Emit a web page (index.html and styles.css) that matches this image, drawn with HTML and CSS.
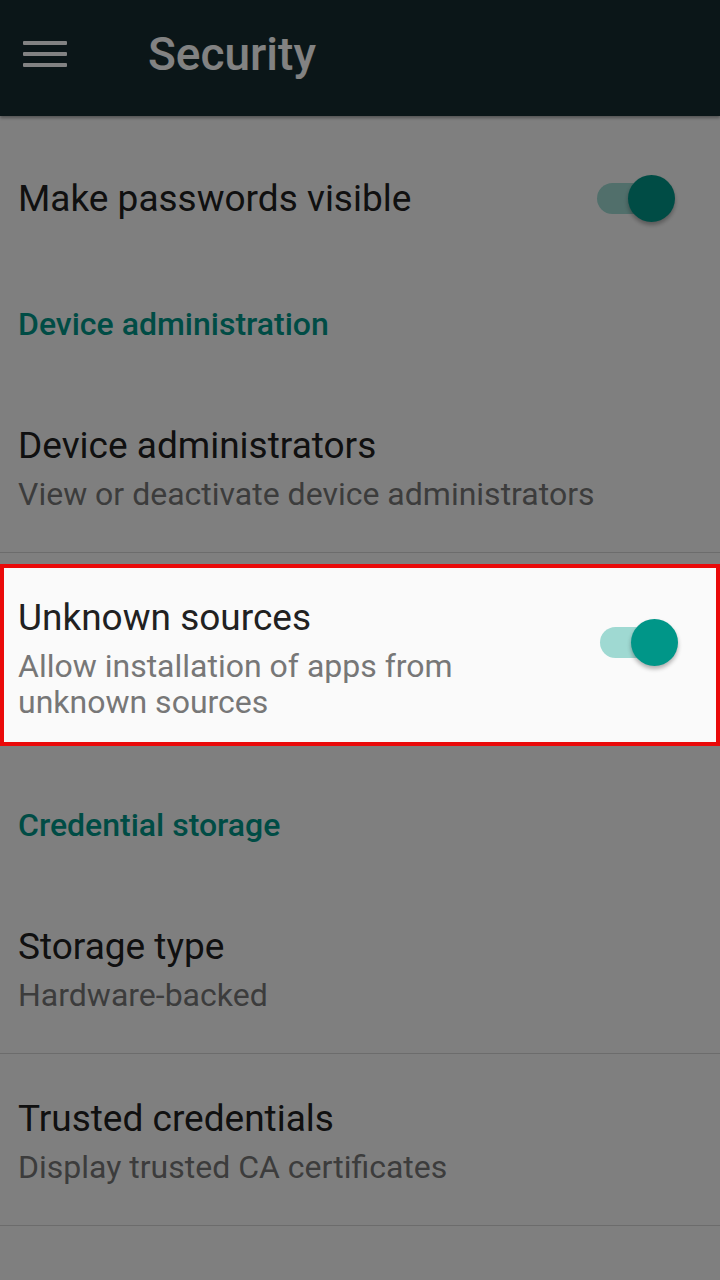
FILE: index.html
```html
<!DOCTYPE html>
<html lang="en">
<head>
  <meta charset="UTF-8">
  <meta name="viewport" content="width=device-width, initial-scale=1.0">
  <title>Security</title>
  <link rel="stylesheet" href="styles.css">
</head>
<body>
<header class="toolbar">
  <svg class="menu-icon" width="44" height="26" viewBox="0 0 44 26">
    <rect x="0" y="0" width="44" height="4" rx="1"/>
    <rect x="0" y="11" width="44" height="4" rx="1"/>
    <rect x="0" y="22" width="44" height="4" rx="1"/>
  </svg>
  <h1 class="toolbar-title">Security</h1>
</header>

<main class="prefs">
  <div class="pref pref-switch top">
    <div class="pref-text">
      <div class="pref-title">Make passwords visible</div>
    </div>
    <span class="switch"><span class="switch-thumb"></span></span>
  </div>

  <div class="pref-category">Device administration</div>

  <div class="pref">
    <div class="pref-text">
      <div class="pref-title">Device administrators</div>
      <div class="pref-summary">View or deactivate device administrators</div>
    </div>
  </div>
  <div class="divider"></div>

  <div class="pref pref-switch highlighted">
    <div class="pref-text">
      <div class="pref-title">Unknown sources</div>
      <div class="pref-summary">Allow installation of apps from unknown sources</div>
    </div>
    <span class="switch"><span class="switch-thumb"></span></span>
  </div>

  <div class="pref-category">Credential storage</div>

  <div class="pref">
    <div class="pref-text">
      <div class="pref-title">Storage type</div>
      <div class="pref-summary">Hardware-backed</div>
    </div>
  </div>
  <div class="divider"></div>

  <div class="pref">
    <div class="pref-text">
      <div class="pref-title">Trusted credentials</div>
      <div class="pref-summary">Display trusted CA certificates</div>
    </div>
  </div>
  <div class="divider"></div>
</main>

<div class="dim"></div>
</body>
</html>
```

FILE: styles.css
```css
body {
  margin: 0;
  font-family: Roboto, "Noto Sans", sans-serif;
  background-color: #fafafa;
  color: #212121;
  height: 1280px;
  overflow: hidden;
}

.toolbar {
  height: 108px;
  padding: 0 0 8px 23px;
  display: flex;
  align-items: center;
  gap: 81px;
  background-color: #172c30;
  box-shadow: 0 2px 3px rgba(0, 0, 0, 0.35);
}

.menu-icon {
  fill: #ffffff;
  flex-shrink: 0;
}

.toolbar-title {
  margin: 0;
  font-size: 46px;
  line-height: 54px;
  font-weight: 500;
  color: #ffffff;
}

.prefs {
  display: flex;
  flex-direction: column;
}

.pref {
  display: flex;
  padding: 43px 18px 40px;
}

.pref-switch {
  align-items: center;
  padding-right: 45px;
}

.pref.top {
  padding-top: 59px;
  padding-bottom: 37px;
}

.pref-text {
  flex: 1;
  min-width: 0;
}

.pref-title {
  font-size: 37px;
  line-height: 44px;
}

.pref-summary {
  margin-top: 8px;
  font-size: 32px;
  line-height: 36px;
  color: #777777;
}

.pref-switch .pref-text {
  padding-right: 20px;
}

.pref-category {
  padding: 45px 18px 37px;
  font-size: 32px;
  line-height: 40px;
  font-weight: 500;
  color: #009688;
}

.divider {
  height: 1px;
  background-color: #d4d4d4;
}

.switch {
  position: relative;
  width: 78px;
  height: 47px;
  flex-shrink: 0;
}

.switch::before {
  content: "";
  position: absolute;
  left: 0;
  top: 8px;
  width: 74px;
  height: 31px;
  border-radius: 16px;
  background-color: #9fd9d2;
}

.switch-thumb {
  position: absolute;
  right: 0;
  top: 0;
  width: 47px;
  height: 47px;
  border-radius: 50%;
  background-color: #009688;
  box-shadow: 0 3px 4px rgba(0, 0, 0, 0.3);
}

/* the row picked out above the dimmed screen */
.highlighted {
  position: relative;
  z-index: 2;
  margin: 11px 0 14px;
  padding: 28px 38px 22px 14px;
  border: 4px solid #ea0a0a;
  background-color: #fafafa;
  align-items: flex-start;
}

.highlighted .switch {
  margin-top: 23px;
}

.dim {
  position: fixed;
  inset: 0;
  z-index: 1;
  background-color: rgba(0, 0, 0, 0.49);
}
```
